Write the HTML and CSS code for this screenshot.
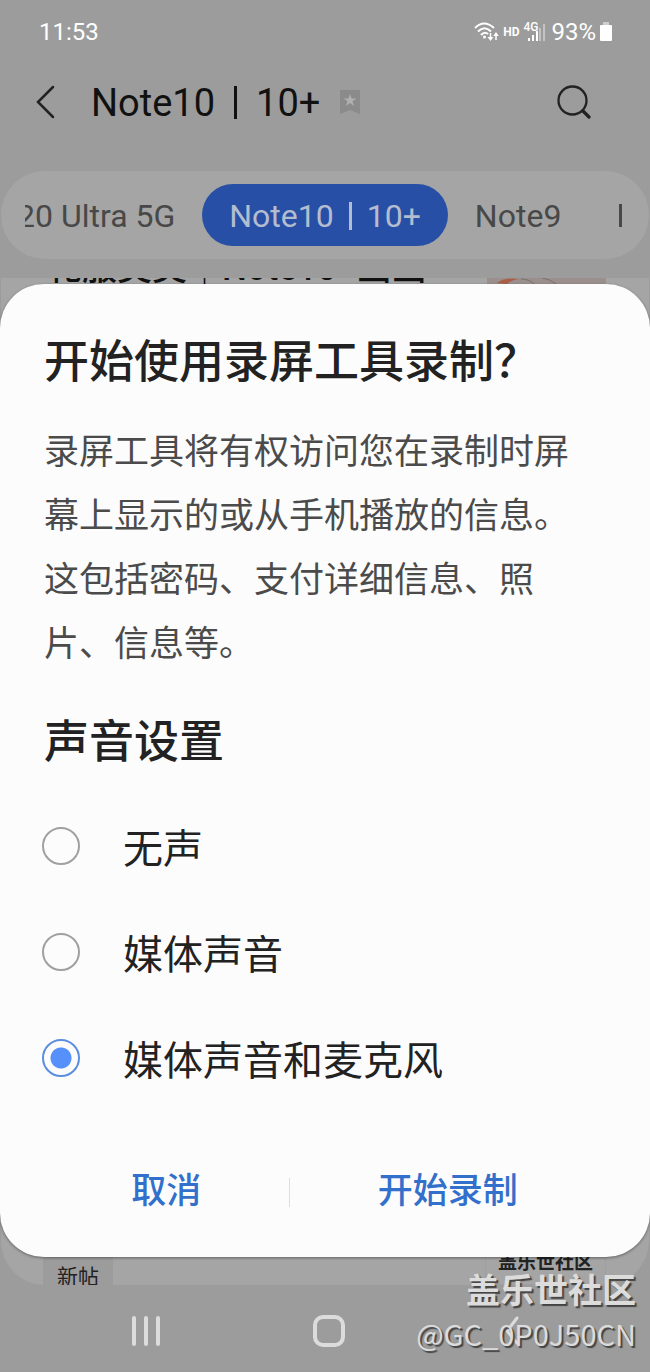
FILE: index.html
```html
<!DOCTYPE html>
<html lang="zh-CN">
<head>
    <meta charset="UTF-8">
    <meta name="viewport" content="width=device-width, initial-scale=1.0">
    <title>Note10｜10+</title>
    <link rel="stylesheet" href="styles.css">
</head>
<body>
    <!-- Status bar -->
    <div class="status-bar">
        <span>11:53</span>
        <div class="status-icons">
            <svg width="25" height="20" viewBox="0 0 25 20" fill="none" stroke="currentColor" stroke-width="2">
                <path d="M1 6Q10 -3 20 6M4 9.500Q10.500 3 17 9.500M7 13Q10.500 9 14 12"/>
                <circle cx="10.500" cy="15" r="1.500" fill="currentColor" stroke="none"/>
                <path d="M16.500 11v5M22 18v-6" stroke-width="1.500"/>
                <path d="M13.500 15h6l-3 4zM19.200 14h5.600L22 10z" fill="currentColor" stroke="none"/>
            </svg>
            <span class="hd">HD</span>
            <div class="signal">
                <span class="network">4G</span>
                <svg width="18" height="18" viewBox="0 0 18 18" fill="currentColor">
                    <path d="M1 15h2v3H1zM5 12h2v6H5zM9 8h2v10H9z"/>
                    <path d="M12 5h2v13h-2zM16 1h2v17h-2z" opacity=".4"/>
                </svg>
            </div>
            <span>93%</span>
            <svg width="12" height="20" viewBox="0 0 12 20" fill="currentColor">
                <path d="M3 0h6v3H3z" opacity=".5"/>
                <rect y="3" width="12" height="16" rx="1"/>
            </svg>
        </div>
    </div>

    <!-- Forum header -->
    <header class="header">
        <button class="icon-btn" aria-label="返回">
            <svg width="20" height="34" viewBox="0 0 20 34" fill="none" stroke="currentColor" stroke-width="2.500" stroke-linecap="round">
                <path d="M17 2L2 17l15 15"/>
            </svg>
        </button>
        <h1>Note10<i class="bar"></i>10+</h1>
        <svg class="bookmark" width="20" height="24" viewBox="0 0 20 24">
            <path d="M0 0h20v24l-10-4-10 4z" fill="#8b8b8b"/>
            <path d="M10 4l1.600 4.500h4.700l-3.800 2.800 1.500 4.600-4-2.800-4 2.800 1.500-4.600-3.800-2.800h4.700z" fill="#b0b0b0"/>
        </svg>
        <button class="icon-btn search" aria-label="搜索">
            <svg width="34" height="34" viewBox="0 0 34 34" fill="none" stroke="currentColor" stroke-linecap="round">
                <circle cx="15.500" cy="15.500" r="14" stroke-width="2.300"/>
                <path d="M26 26l6 6" stroke-width="3.200"/>
            </svg>
        </button>
    </header>

    <!-- Model tabs -->
    <nav class="tabs">
        <div class="tab-list">
            <a href="#" class="tab cut">20 Ultra 5G</a>
            <a href="#" class="tab active">Note10<i class="bar"></i>10+</a>
            <a href="#" class="tab">Note9</a>
            <a href="#" class="tab next" aria-label="下一个"><i class="bar"></i></a>
        </div>
    </nav>

    <!-- Feed with the dialog on top of it -->
    <main class="stage">
        <div class="feed">
            <div class="post">
                <p class="post-title">礼服美美｜Note10+画画</p>
                <svg class="thumb" width="119" height="40" viewBox="0 0 119 40">
                    <path d="M0 0h119v40H0z" fill="#9a8f8c"/>
                    <path d="M10 5q8-6 22-4q-8 1-12 5z" fill="#a85f45"/>
                    <path d="M34 1q9 0 14 6M55 0q8 1 14 6" stroke="#79706f" fill="none"/>
                </svg>
            </div>
            <div class="post-footer">
                <span class="tag">新帖</span>
                <span class="source">盖乐世社区</span>
            </div>
        </div>

        <form class="dialog" role="dialog" aria-labelledby="dialogTitle">
            <h2 id="dialogTitle">开始使用录屏工具录制？</h2>
            <p class="message">录屏工具将有权访问您在录制时屏幕上显示的或从手机播放的信息。这包括密码、支付详细信息、照片、信息等。</p>
            <fieldset>
                <legend>声音设置</legend>
                <label class="option"><input type="radio" name="sound" value="none"><span>无声</span></label>
                <label class="option"><input type="radio" name="sound" value="media"><span>媒体声音</span></label>
                <label class="option"><input type="radio" name="sound" value="mic" checked><span>媒体声音和麦克风</span></label>
            </fieldset>
            <div class="actions">
                <button type="button" class="cancel">取消</button>
                <span class="divider"></span>
                <button type="button" class="start">开始录制</button>
            </div>
        </form>
    </main>

    <!-- System navigation -->
    <footer class="nav-bar">
        <button aria-label="最近">
            <svg width="30" height="32" viewBox="0 0 30 32" stroke="currentColor" stroke-width="4" stroke-linecap="round">
                <path d="M3 3v26M15 3v26M27 3v26"/>
            </svg>
        </button>
        <button aria-label="主页">
            <svg width="32" height="32" viewBox="0 0 32 32" fill="none" stroke="currentColor" stroke-width="4">
                <rect x="2" y="2" width="28" height="28" rx="8"/>
            </svg>
        </button>
        <button aria-label="返回">
            <svg width="14" height="30" viewBox="0 0 14 30" fill="none" stroke="currentColor" stroke-width="3" stroke-linecap="round">
                <path d="M12 2L2 15l10 12"/>
            </svg>
        </button>
    </footer>

    <div class="watermark">
        <strong>盖乐世社区</strong>
        <span>@GC_0P0J50CN</span>
    </div>
</body>
</html>
```
FILE: styles.css
```css
:root {
    --bg: #9c9c9c;
    --card: #a5a5a5;
    --dialog: #fcfcfc;
    --text: #222;
    --blue: #3370cb;
}

* {
    box-sizing: border-box;
    margin: 0;
    padding: 0;
}

body {
    position: relative;
    min-height: 100vh;
    display: flex;
    flex-direction: column;
    font-family: Roboto, "Noto Sans CJK SC", sans-serif;
    color: var(--text);
    background: var(--bg);
    overflow-x: hidden;
}

button {
    border: none;
    background: none;
    color: inherit;
    font: inherit;
    cursor: pointer;
}

svg {
    display: block;
}

a {
    color: inherit;
    text-decoration: none;
}

/* thin divider inside model names */
.bar {
    display: inline-block;
    width: 3px;
    height: 33px;
    margin: 0 19px;
    background: currentColor;
    vertical-align: -3px;
}

.status-bar {
    display: flex;
    justify-content: space-between;
    align-items: center;
    height: 64px;
    padding: 0 38px 0 39px;
    color: #fff;
    font-size: 24px;
}

.status-icons {
    display: flex;
    align-items: center;
    gap: 4px;
}

.hd {
    font-size: 12px;
    font-weight: 700;
}

.signal {
    position: relative;
    padding-left: 4px;
    margin-right: 2px;
}

.network {
    position: absolute;
    left: 0;
    top: -2px;
    font-size: 12px;
    line-height: 12px;
    font-weight: 500;
}

.header {
    display: flex;
    align-items: center;
    height: 76px;
    padding: 0 59px 0 36px;
}

h1 {
    margin-left: 35px;
    padding-top: 2px;
    font-size: 38px;
    font-weight: 400;
    color: #111;
}

.bookmark {
    margin-left: 20px;
}

.search {
    margin-left: auto;
}

.tabs {
    height: 88px;
    margin: 31px 1px 19px;
    padding: 0 24px;
    border-radius: 44px;
    background: var(--card);
}

.tab-list {
    display: flex;
    align-items: center;
    height: 88px;
    overflow: hidden;
}

.tab {
    flex: none;
    padding: 2px 27px 0;
    font-size: 32px;
    line-height: 60px;
    color: #484848;
    white-space: nowrap;
}

.tab.cut {
    margin-left: -35px;
}

.tab.active {
    border-radius: 31px;
    color: #b4bdd0;
    background: #274fa5;
}

.tab .bar {
    height: 28px;
    margin: 0 15px;
}

.tab.next .bar {
    height: 23px;
    margin: 0 4px;
    vertical-align: 0;
}

/* feed and dialog share one grid cell */
.stage {
    flex: 1;
    display: grid;
}

.feed,
.dialog {
    grid-area: 1 / 1;
}

.feed {
    display: flex;
    flex-direction: column;
    justify-content: space-between;
    margin: 0 1px;
    border-radius: 0 0 44px 44px;
    background: var(--card);
    overflow: hidden;
}

.post {
    display: flex;
    justify-content: space-between;
    height: 40px;
    padding: 0 43px 0 46px;
}

.post-title {
    margin-top: -31px;
    font-size: 35px;
    line-height: 44px;
    font-weight: 500;
    color: #111;
}

.post-footer {
    display: flex;
    justify-content: space-between;
    align-items: flex-end;
    padding: 0 43px 0 42px;
}

.tag {
    height: 30px;
    padding: 12px 14px 0;
    font-size: 21px;
    line-height: 20px;
    background: var(--bg);
}

.source {
    height: 34px;
    padding: 0 12px;
    font-size: 19px;
    line-height: 22px;
    font-weight: 700;
    border: 1px solid #9f9f9f;
}

.dialog {
    z-index: 1;
    margin: 6px 0 28px;
    padding: 47px 44px 20px;
    border-radius: 44px;
    background: var(--dialog);
    box-shadow: 0 1px 3px rgba(0, 0, 0, 0.4);
}

h2,
legend {
    font-size: 45px;
    line-height: 64px;
    font-weight: 500;
}

.message {
    margin-top: 26px;
    padding-right: 24px;
    font-size: 35px;
    line-height: 64px;
    color: #4b4b4b;
}

fieldset {
    margin-top: 34px;
    border: none;
}

legend {
    margin-bottom: 18px;
}

.option {
    display: flex;
    align-items: center;
    gap: 43px;
    height: 106px;
    margin-left: -2px;
    font-size: 40px;
}

.option input {
    appearance: none;
    width: 38px;
    height: 38px;
    border: 2px solid #a0a0a0;
    border-radius: 50%;
}

.option input:checked {
    border-color: #5b8de0;
    background: radial-gradient(circle, #5590fb 10px, transparent 11px);
}

.actions {
    display: flex;
    align-items: center;
    margin-top: 46px;
}

.actions button {
    font-size: 35px;
    line-height: 70px;
    font-weight: 500;
    color: var(--blue);
}

.cancel {
    flex: 245;
}

.start {
    flex: 317;
}

.divider {
    width: 1px;
    height: 29px;
    background: #ddd;
}

.nav-bar {
    display: flex;
    align-items: center;
    justify-content: space-between;
    height: 87px;
    padding: 5px 114px 0 122px;
    color: #dcdcdc;
}

.nav-bar button {
    display: flex;
    justify-content: center;
    width: 48px;
}

.watermark {
    position: absolute;
    right: 14px;
    bottom: 16px;
    display: flex;
    flex-direction: column;
    align-items: flex-end;
    font-family: "Noto Sans CJK SC", sans-serif;
    font-size: 29px;
    line-height: 45px;
    color: #dcdcdc;
    text-shadow: 2px 2px 1px #444;
}

.watermark strong {
    font-size: 34px;
}
```
